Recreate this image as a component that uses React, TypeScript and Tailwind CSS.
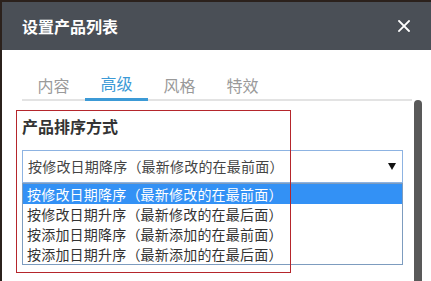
import React from "react";

const TABS = ["内容", "高级", "风格", "特效"];
const ACTIVE_TAB = 1;

const OPTIONS = [
  "按修改日期降序（最新修改的在最前面）",
  "按修改日期升序（最新修改的在最后面）",
  "按添加日期降序（最新添加的在最前面）",
  "按添加日期升序（最新添加的在最后面）",
];

const font = "font-['Noto_Sans_CJK_SC','Noto_Sans',sans-serif]";

export default function App() {
  return (
    <div className={`h-[281px] w-[431px] overflow-hidden bg-[#2b211c] pl-[2px] pt-[2px] ${font}`}>
      <div className="flex h-full flex-col bg-white">
        {/* header */}
        <div className="flex h-[48px] shrink-0 items-center justify-between bg-[#4a4f56] pl-[20px] pr-[21px]">
          <div className="text-[16px] font-bold leading-none text-white">设置产品列表</div>
          <svg width="12" height="12" viewBox="0 0 12 12" className="text-white">
            <path d="M1 1 L11 11 M11 1 L1 11" stroke="currentColor" strokeWidth="1.8" strokeLinecap="square" />
          </svg>
        </div>

        {/* body */}
        <div className="relative flex-1 pl-[20px] pr-[19px]">
          <div className="mt-[20px] flex border-b-2 border-[#e3e3e3]">
            {TABS.map((tab, i) => (
              <div
                key={tab}
                className={
                  i === ACTIVE_TAB
                    ? "-mb-[2px] flex h-[31px] w-[63px] items-center justify-center border-b-[3px] border-[#3c9ad6] pb-[2px] text-[16px] text-[#3c9ad6]"
                    : "-mb-[2px] flex h-[31px] w-[63px] items-center justify-center pb-[2px] text-[16px] text-[#9a9a9a]"
                }
              >
                {tab}
              </div>
            ))}
          </div>

          <div className="mt-[14px] h-[22px] text-[16px] font-bold leading-[22px] text-[#333]">产品排序方式</div>

          <div className="mt-[13px] flex h-[33px] w-[381px] items-center justify-between border border-[#8db3e2] pl-[5px] pr-[6px] text-[14px] tracking-[0.2px] text-[#444]">
            <span>{OPTIONS[0]}</span>
            <svg width="8" height="7" viewBox="0 0 8 7">
              <path d="M0 0 L8 0 L4 7 Z" fill="#111" />
            </svg>
          </div>

          <div className="w-[381px] border border-[#7d9cbf] bg-white">
            {OPTIONS.map((opt, i) => (
              <div
                key={opt}
                className={
                  i === 0
                    ? "flex h-[20px] items-center bg-[#3391f5] pl-[4px] text-[14px] tracking-[0.2px] text-white"
                    : "flex h-[20px] items-center pl-[4px] text-[14px] tracking-[0.2px] text-[#333]"
                }
              >
                {opt}
              </div>
            ))}
          </div>

          {/* annotation box */}
          <div className="pointer-events-none absolute left-[14px] top-[60px] h-[163px] w-[275px] border border-[#b5262c]" />

          {/* scrollbar */}
          <div className="absolute right-[9px] top-[50px] h-[200px] w-[8px] rounded-t-[4px] bg-[#595959]" />
        </div>
      </div>
    </div>
  );
}
